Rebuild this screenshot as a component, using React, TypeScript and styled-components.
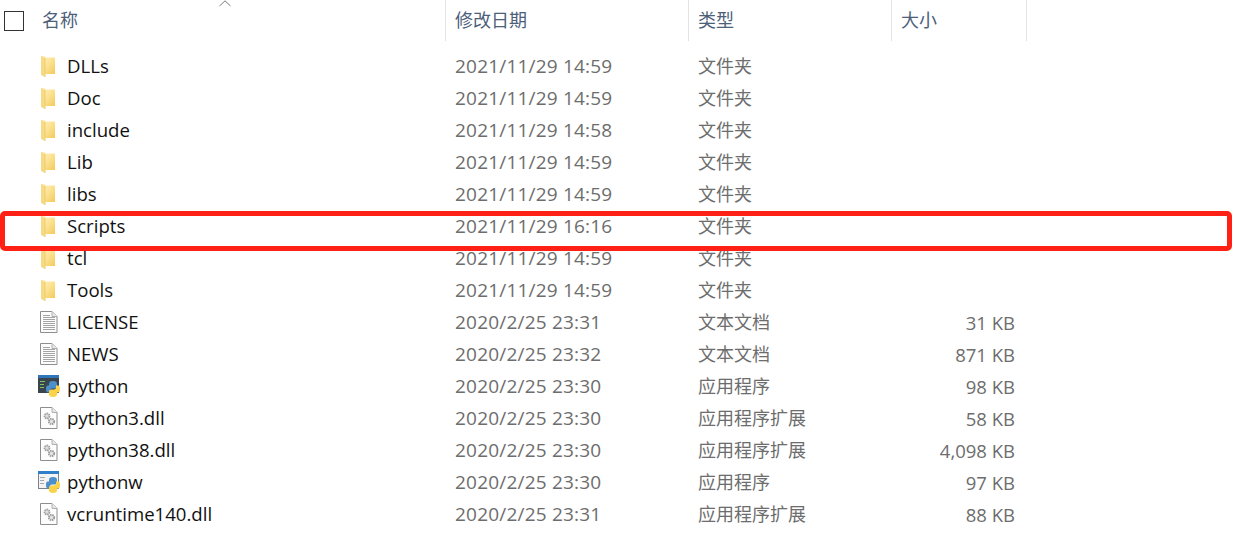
import type { ReactNode } from "react";
import styled, { createGlobalStyle } from "styled-components";

type IconKind = "folder" | "text" | "dll" | "python" | "pythonw";

type FileRow = {
    name: string;
    date: string;
    type: string;
    size?: string;
    icon: IconKind;
}

const rows: FileRow[] = [
    { name: "DLLs", date: "2021/11/29 14:59", type: "文件夹", icon: "folder" },
    { name: "Doc", date: "2021/11/29 14:59", type: "文件夹", icon: "folder" },
    { name: "include", date: "2021/11/29 14:58", type: "文件夹", icon: "folder" },
    { name: "Lib", date: "2021/11/29 14:59", type: "文件夹", icon: "folder" },
    { name: "libs", date: "2021/11/29 14:59", type: "文件夹", icon: "folder" },
    { name: "Scripts", date: "2021/11/29 16:16", type: "文件夹", icon: "folder" },
    { name: "tcl", date: "2021/11/29 14:59", type: "文件夹", icon: "folder" },
    { name: "Tools", date: "2021/11/29 14:59", type: "文件夹", icon: "folder" },
    { name: "LICENSE", date: "2020/2/25 23:31", type: "文本文档", size: "31 KB", icon: "text" },
    { name: "NEWS", date: "2020/2/25 23:32", type: "文本文档", size: "871 KB", icon: "text" },
    { name: "python", date: "2020/2/25 23:30", type: "应用程序", size: "98 KB", icon: "python" },
    { name: "python3.dll", date: "2020/2/25 23:30", type: "应用程序扩展", size: "58 KB", icon: "dll" },
    { name: "python38.dll", date: "2020/2/25 23:30", type: "应用程序扩展", size: "4,098 KB", icon: "dll" },
    { name: "pythonw", date: "2020/2/25 23:30", type: "应用程序", size: "97 KB", icon: "pythonw" },
    { name: "vcruntime140.dll", date: "2020/2/25 23:31", type: "应用程序扩展", size: "88 KB", icon: "dll" },
];

function FolderIcon() {
    return (
        <FolderSvg width="14" height="21" viewBox="0 0 14 21">
            <defs>
                <linearGradient id="folderBody" x1="0" y1="0" x2="1" y2="1">
                    <stop offset="0" stopColor="#fff3c4" />
                    <stop offset="0.55" stopColor="#fbe08e" />
                    <stop offset="1" stopColor="#f3c95c" />
                </linearGradient>
            </defs>
            <path d="M0 0 H4 V1.5 H14 V18 H4 Z" fill="url(#folderBody)" />
            <path d="M0 0 L4 2 V21 L0 19 Z" fill="#f7da85" />
            <path d="M4 2 V21" stroke="#f0c75f" strokeWidth="0.8" />
        </FolderSvg>
    )
}

function PageShell(props: { children?: ReactNode }) {
    return (
        <PageSvg width="18" height="22" viewBox="0 0 18 22">
            <path d="M0.5 0.5 H12 L17 5.5 V21.5 H0.5 Z" fill="#fdfdfd" stroke="#8e8e8e" />
            <path d="M12 0.5 V5.5 H17" fill="#e6e6e6" stroke="#b0b0b0" />
            {props.children}
        </PageSvg>
    )
}

function TextIcon() {
    return (
        <PageShell>
            {[4, 6, 8, 10, 12, 14, 16, 18].map((y) => (
                <path key={y} d={`M3 ${y + 0.5} H${y < 6 ? 10 : 15}`} stroke="#a4a4a4" />
            ))}
        </PageShell>
    )
}

function DllIcon() {
    return (
        <PageShell>
            <circle cx="7" cy="9" r="2.5" fill="#dcdcdc" stroke="#a0a0a0" strokeWidth="1.8" strokeDasharray="1.5 0.7" />
            <circle cx="11.5" cy="14.5" r="2.7" fill="#e2e2e2" stroke="#969696" strokeWidth="1.8" strokeDasharray="1.5 0.7" />
        </PageShell>
    )
}

const snakePath = "M7 0 C4 0 3 1 3 3 V4.5 H1.5 C0.5 4.5 0 6 0 8 C0 10 0.6 11.5 2 11.5 H4 V9.5 C4 8.3 4.8 7.5 6 7.5 H9 C10.2 7.5 11 6.7 11 5.5 V3 C11 1 10 0 7 0 Z";

function PythonSnake() {
    return (
        <g transform="translate(8 6)">
            <path d={snakePath} fill="#4b90cb" />
            <path d={snakePath} fill="#fbd348" transform="rotate(180 7 8)" />
        </g>
    )
}

function PythonIcon() {
    return (
        <svg width="22" height="22" viewBox="0 0 22 22">
            <rect x="0" y="0" width="21" height="18" fill="#3a444c" />
            <rect x="0" y="0" width="21" height="3" fill="#2f76b8" />
            <path d="M2 6.5 H7 M2 9.5 H6 M2 12.5 H6" stroke="#79c465" strokeWidth="1" />
            <PythonSnake />
        </svg>
    )
}

function PythonwIcon() {
    return (
        <svg width="22" height="22" viewBox="0 0 22 22">
            <rect x="0.5" y="0.5" width="20" height="17" fill="#f4f4f4" stroke="#77828c" />
            <rect x="0" y="0" width="21" height="3" fill="#2f80c8" />
            <path d="M2 6.5 H7 M2 9.5 H6 M2 12.5 H6" stroke="#a8a8a8" strokeWidth="1" />
            <PythonSnake />
        </svg>
    )
}

function FileIcon(props: { kind: IconKind }) {
    if (props.kind === "folder") return <FolderIcon />;
    if (props.kind === "text") return <TextIcon />;
    if (props.kind === "dll") return <DllIcon />;
    if (props.kind === "python") return <PythonIcon />;
    return <PythonwIcon />;
}

export default function App() {
    return (
        <Page>
            <GlobalStyle />
            <SortArrow width="14" height="7" viewBox="0 0 14 7">
                <path d="M1.5 6 L7 0.8 L12.5 6" fill="none" stroke="#7a7a7a" strokeWidth="1" />
            </SortArrow>
            <Header>
                <NameHead>
                    <Checkbox />
                    <HeadLabel>名称</HeadLabel>
                </NameHead>
                <ColumnHead><HeadLabel>修改日期</HeadLabel></ColumnHead>
                <ColumnHead><HeadLabel>类型</HeadLabel></ColumnHead>
                <ColumnHead><HeadLabel>大小</HeadLabel></ColumnHead>
            </Header>
            <List>
                {rows.map((row) => (
                    <Row key={row.name}>
                        <IconCell><FileIcon kind={row.icon} /></IconCell>
                        <NameCell>{row.name}</NameCell>
                        <DateCell>{row.date}</DateCell>
                        <TypeCell>{row.type}</TypeCell>
                        <SizeCell>{row.size}</SizeCell>
                    </Row>
                ))}
            </List>
            <Highlight />
        </Page>
    )
}

const GlobalStyle = createGlobalStyle`
  html, body {
    margin: 0;
    padding: 0;
    background: #fff;
  }
`
const Page = styled.div`
  position: relative;
  width: 1236px;
  height: 552px;
  overflow: hidden;
  background: #fff;
  font-family: "Open Sans", "Noto Sans CJK SC", sans-serif;
  font-size: 18px;
`
const SortArrow = styled.svg`
  position: absolute;
  left: 218px;
  top: 0;
`
const Header = styled.div`
  display: grid;
  grid-template-columns: 446px 243px 203px 135px;
  height: 41px;
`
const ColumnHead = styled.div`
  display: flex;
  align-items: center;
  height: 41px;
  box-sizing: border-box;
  padding-left: 9px;
  border-right: 1px solid #e3e3e3;
`
const NameHead = styled(ColumnHead)`
  padding-left: 4px;
`
const Checkbox = styled.span`
  width: 20px;
  height: 20px;
  box-sizing: border-box;
  border: 1px solid #333;
  margin-right: 18px;
`
const HeadLabel = styled.span`
  color: #4c607a;
  line-height: 41px;
`
const List = styled.div`
  display: flex;
  flex-direction: column;
  padding-top: 9px;
`
const Row = styled.div`
  display: grid;
  grid-template-columns: 67px 388px 243px 203px 114px;
  align-items: center;
  height: 32px;
`
const IconCell = styled.div`
  display: flex;
  align-items: center;
  padding-left: 38px;
  height: 32px;
`
const FolderSvg = styled.svg`
  margin-left: 3px;
`
const PageSvg = styled.svg`
  margin-left: 2px;
`
const NameCell = styled.div`
  color: #111;
  font-size: 18.6px;
  padding-bottom: 2px;
`
const DateCell = styled.div`
  color: #6d6d6d;
  font-size: 19px;
  letter-spacing: 0.2px;
`
const TypeCell = styled.div`
  color: #6d6d6d;
  padding-bottom: 2px;
`
const SizeCell = styled.div`
  color: #6d6d6d;
  font-size: 18.5px;
  text-align: right;
`
const Highlight = styled.div`
  position: absolute;
  left: 0;
  top: 211px;
  width: 1232px;
  height: 40px;
  box-sizing: border-box;
  border: 5px solid #ff2116;
  border-radius: 5px;
`
